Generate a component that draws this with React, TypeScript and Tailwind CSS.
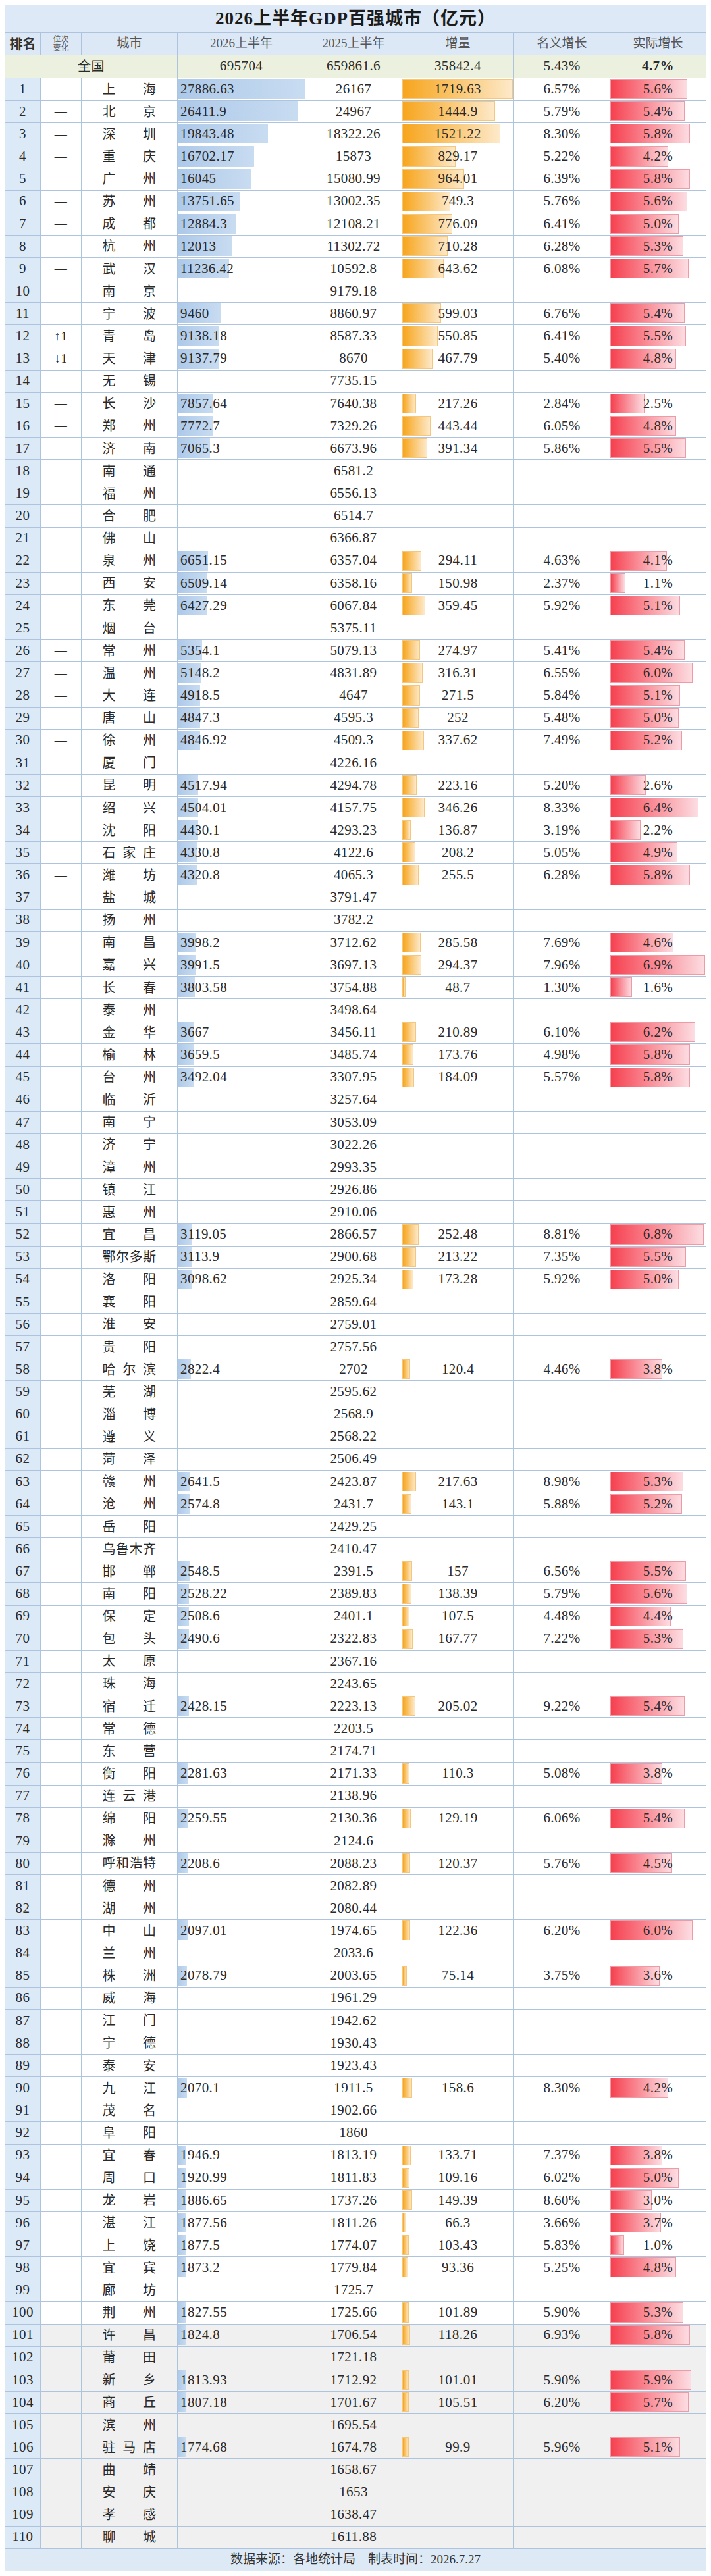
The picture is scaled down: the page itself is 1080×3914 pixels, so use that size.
import React from 'react';

type Row = [string, string, string, string, string, string, string, string];

// rank, change, city, 2026H1, 2025H1, increase, nominal, real
const rows: Row[] = [
  ['1', '—', '上海', '27886.63', '26167', '1719.63', '6.57%', '5.6%'],
  ['2', '—', '北京', '26411.9', '24967', '1444.9', '5.79%', '5.4%'],
  ['3', '—', '深圳', '19843.48', '18322.26', '1521.22', '8.30%', '5.8%'],
  ['4', '—', '重庆', '16702.17', '15873', '829.17', '5.22%', '4.2%'],
  ['5', '—', '广州', '16045', '15080.99', '964.01', '6.39%', '5.8%'],
  ['6', '—', '苏州', '13751.65', '13002.35', '749.3', '5.76%', '5.6%'],
  ['7', '—', '成都', '12884.3', '12108.21', '776.09', '6.41%', '5.0%'],
  ['8', '—', '杭州', '12013', '11302.72', '710.28', '6.28%', '5.3%'],
  ['9', '—', '武汉', '11236.42', '10592.8', '643.62', '6.08%', '5.7%'],
  ['10', '—', '南京', '', '9179.18', '', '', ''],
  ['11', '—', '宁波', '9460', '8860.97', '599.03', '6.76%', '5.4%'],
  ['12', '↑1', '青岛', '9138.18', '8587.33', '550.85', '6.41%', '5.5%'],
  ['13', '↓1', '天津', '9137.79', '8670', '467.79', '5.40%', '4.8%'],
  ['14', '—', '无锡', '', '7735.15', '', '', ''],
  ['15', '—', '长沙', '7857.64', '7640.38', '217.26', '2.84%', '2.5%'],
  ['16', '—', '郑州', '7772.7', '7329.26', '443.44', '6.05%', '4.8%'],
  ['17', '', '济南', '7065.3', '6673.96', '391.34', '5.86%', '5.5%'],
  ['18', '', '南通', '', '6581.2', '', '', ''],
  ['19', '', '福州', '', '6556.13', '', '', ''],
  ['20', '', '合肥', '', '6514.7', '', '', ''],
  ['21', '', '佛山', '', '6366.87', '', '', ''],
  ['22', '', '泉州', '6651.15', '6357.04', '294.11', '4.63%', '4.1%'],
  ['23', '', '西安', '6509.14', '6358.16', '150.98', '2.37%', '1.1%'],
  ['24', '', '东莞', '6427.29', '6067.84', '359.45', '5.92%', '5.1%'],
  ['25', '—', '烟台', '', '5375.11', '', '', ''],
  ['26', '—', '常州', '5354.1', '5079.13', '274.97', '5.41%', '5.4%'],
  ['27', '—', '温州', '5148.2', '4831.89', '316.31', '6.55%', '6.0%'],
  ['28', '—', '大连', '4918.5', '4647', '271.5', '5.84%', '5.1%'],
  ['29', '—', '唐山', '4847.3', '4595.3', '252', '5.48%', '5.0%'],
  ['30', '—', '徐州', '4846.92', '4509.3', '337.62', '7.49%', '5.2%'],
  ['31', '', '厦门', '', '4226.16', '', '', ''],
  ['32', '', '昆明', '4517.94', '4294.78', '223.16', '5.20%', '2.6%'],
  ['33', '', '绍兴', '4504.01', '4157.75', '346.26', '8.33%', '6.4%'],
  ['34', '', '沈阳', '4430.1', '4293.23', '136.87', '3.19%', '2.2%'],
  ['35', '—', '石家庄', '4330.8', '4122.6', '208.2', '5.05%', '4.9%'],
  ['36', '—', '潍坊', '4320.8', '4065.3', '255.5', '6.28%', '5.8%'],
  ['37', '', '盐城', '', '3791.47', '', '', ''],
  ['38', '', '扬州', '', '3782.2', '', '', ''],
  ['39', '', '南昌', '3998.2', '3712.62', '285.58', '7.69%', '4.6%'],
  ['40', '', '嘉兴', '3991.5', '3697.13', '294.37', '7.96%', '6.9%'],
  ['41', '', '长春', '3803.58', '3754.88', '48.7', '1.30%', '1.6%'],
  ['42', '', '泰州', '', '3498.64', '', '', ''],
  ['43', '', '金华', '3667', '3456.11', '210.89', '6.10%', '6.2%'],
  ['44', '', '榆林', '3659.5', '3485.74', '173.76', '4.98%', '5.8%'],
  ['45', '', '台州', '3492.04', '3307.95', '184.09', '5.57%', '5.8%'],
  ['46', '', '临沂', '', '3257.64', '', '', ''],
  ['47', '', '南宁', '', '3053.09', '', '', ''],
  ['48', '', '济宁', '', '3022.26', '', '', ''],
  ['49', '', '漳州', '', '2993.35', '', '', ''],
  ['50', '', '镇江', '', '2926.86', '', '', ''],
  ['51', '', '惠州', '', '2910.06', '', '', ''],
  ['52', '', '宜昌', '3119.05', '2866.57', '252.48', '8.81%', '6.8%'],
  ['53', '', '鄂尔多斯', '3113.9', '2900.68', '213.22', '7.35%', '5.5%'],
  ['54', '', '洛阳', '3098.62', '2925.34', '173.28', '5.92%', '5.0%'],
  ['55', '', '襄阳', '', '2859.64', '', '', ''],
  ['56', '', '淮安', '', '2759.01', '', '', ''],
  ['57', '', '贵阳', '', '2757.56', '', '', ''],
  ['58', '', '哈尔滨', '2822.4', '2702', '120.4', '4.46%', '3.8%'],
  ['59', '', '芜湖', '', '2595.62', '', '', ''],
  ['60', '', '淄博', '', '2568.9', '', '', ''],
  ['61', '', '遵义', '', '2568.22', '', '', ''],
  ['62', '', '菏泽', '', '2506.49', '', '', ''],
  ['63', '', '赣州', '2641.5', '2423.87', '217.63', '8.98%', '5.3%'],
  ['64', '', '沧州', '2574.8', '2431.7', '143.1', '5.88%', '5.2%'],
  ['65', '', '岳阳', '', '2429.25', '', '', ''],
  ['66', '', '乌鲁木齐', '', '2410.47', '', '', ''],
  ['67', '', '邯郸', '2548.5', '2391.5', '157', '6.56%', '5.5%'],
  ['68', '', '南阳', '2528.22', '2389.83', '138.39', '5.79%', '5.6%'],
  ['69', '', '保定', '2508.6', '2401.1', '107.5', '4.48%', '4.4%'],
  ['70', '', '包头', '2490.6', '2322.83', '167.77', '7.22%', '5.3%'],
  ['71', '', '太原', '', '2367.16', '', '', ''],
  ['72', '', '珠海', '', '2243.65', '', '', ''],
  ['73', '', '宿迁', '2428.15', '2223.13', '205.02', '9.22%', '5.4%'],
  ['74', '', '常德', '', '2203.5', '', '', ''],
  ['75', '', '东营', '', '2174.71', '', '', ''],
  ['76', '', '衡阳', '2281.63', '2171.33', '110.3', '5.08%', '3.8%'],
  ['77', '', '连云港', '', '2138.96', '', '', ''],
  ['78', '', '绵阳', '2259.55', '2130.36', '129.19', '6.06%', '5.4%'],
  ['79', '', '滁州', '', '2124.6', '', '', ''],
  ['80', '', '呼和浩特', '2208.6', '2088.23', '120.37', '5.76%', '4.5%'],
  ['81', '', '德州', '', '2082.89', '', '', ''],
  ['82', '', '湖州', '', '2080.44', '', '', ''],
  ['83', '', '中山', '2097.01', '1974.65', '122.36', '6.20%', '6.0%'],
  ['84', '', '兰州', '', '2033.6', '', '', ''],
  ['85', '', '株洲', '2078.79', '2003.65', '75.14', '3.75%', '3.6%'],
  ['86', '', '威海', '', '1961.29', '', '', ''],
  ['87', '', '江门', '', '1942.62', '', '', ''],
  ['88', '', '宁德', '', '1930.43', '', '', ''],
  ['89', '', '泰安', '', '1923.43', '', '', ''],
  ['90', '', '九江', '2070.1', '1911.5', '158.6', '8.30%', '4.2%'],
  ['91', '', '茂名', '', '1902.66', '', '', ''],
  ['92', '', '阜阳', '', '1860', '', '', ''],
  ['93', '', '宜春', '1946.9', '1813.19', '133.71', '7.37%', '3.8%'],
  ['94', '', '周口', '1920.99', '1811.83', '109.16', '6.02%', '5.0%'],
  ['95', '', '龙岩', '1886.65', '1737.26', '149.39', '8.60%', '3.0%'],
  ['96', '', '湛江', '1877.56', '1811.26', '66.3', '3.66%', '3.7%'],
  ['97', '', '上饶', '1877.5', '1774.07', '103.43', '5.83%', '1.0%'],
  ['98', '', '宜宾', '1873.2', '1779.84', '93.36', '5.25%', '4.8%'],
  ['99', '', '廊坊', '', '1725.7', '', '', ''],
  ['100', '', '荆州', '1827.55', '1725.66', '101.89', '5.90%', '5.3%'],
  ['101', '', '许昌', '1824.8', '1706.54', '118.26', '6.93%', '5.8%'],
  ['102', '', '莆田', '', '1721.18', '', '', ''],
  ['103', '', '新乡', '1813.93', '1712.92', '101.01', '5.90%', '5.9%'],
  ['104', '', '商丘', '1807.18', '1701.67', '105.51', '6.20%', '5.7%'],
  ['105', '', '滨州', '', '1695.54', '', '', ''],
  ['106', '', '驻马店', '1774.68', '1674.78', '99.9', '5.96%', '5.1%'],
  ['107', '', '曲靖', '', '1658.67', '', '', ''],
  ['108', '', '安庆', '', '1653', '', '', ''],
  ['109', '', '孝感', '', '1638.47', '', '', ''],
  ['110', '', '聊城', '', '1611.88', '', '', ''],
];

const COLS = 'grid grid-cols-[54px_62px_146px_194px_147px_170px_146px_146px]';
const CELL = 'border-r border-b border-[#aec3de] flex items-center justify-center';

function City({ name }: { name: string }) {
  return (
    <div className="w-[82px] flex justify-between text-[20px] leading-none text-[#2a2a2a]">
      {Array.from(name).map((ch, i) => (
        <span key={i}>{ch}</span>
      ))}
    </div>
  );
}

function DataRow({ row }: { row: Row }) {
  const [rank, change, city, v26, v25, inc, nom, real] = row;
  const gray = Number(rank) >= 101;
  const bg = gray ? 'bg-[#f0f0f0]' : 'bg-white';
  const realNum = parseFloat(real);

  return (
    <div className={`${COLS} h-[34.14px] text-[21px] tracking-[0.4px] text-[#2a2a2a]`}>
      <div className={`${CELL} bg-[#dce9f6]`}>{rank}</div>
      <div className={`${CELL} ${bg} text-[19px]`}>{change}</div>
      <div className={`${CELL} ${bg}`}>
        <City name={city} />
      </div>

      {/* 2026 with blue data bar */}
      <div className={`${CELL} ${bg} relative !justify-start`}>
        {v26 && (
          <div
            className="absolute left-0 top-[1px] bottom-[2px] bg-[linear-gradient(to_right,#adc9e9,#c8dcf1)]"
            style={{ width: `${(parseFloat(v26) / 27886.63) * 193}px` }}
          />
        )}
        <span className="relative pl-[4px]">{v26}</span>
      </div>

      <div className={`${CELL} ${bg}`}>{v25}</div>

      {/* increase with orange data bar */}
      <div className={`${CELL} ${bg} relative`}>
        {inc && (
          <div
            className="absolute left-0 top-[1px] bottom-[2px] border border-[#f4c77c] bg-[linear-gradient(to_right,#f7a51c,#fde9c9)]"
            style={{ width: `${Math.max(3, (parseFloat(inc) / 1719.63) * 168)}px` }}
          />
        )}
        <span className="relative">{inc}</span>
      </div>

      <div className={`${CELL} ${bg}`}>{nom}</div>

      {/* real growth with red data bar */}
      <div className={`${CELL} ${bg} relative`}>
        {real && (
          <div
            className="absolute left-0 top-[1px] bottom-[2px] border border-[#ef9ba5] bg-[linear-gradient(to_right,#f6404f,#fcdde2)]"
            style={{ width: `${(realNum / 6.9) * 144}px` }}
          />
        )}
        <span className="relative">{real}</span>
      </div>
    </div>
  );
}

export default function App() {
  return (
    <div className="min-h-[3914px] bg-white pt-[7px] px-[7px] font-['Liberation_Serif','Noto_Sans_CJK_SC',serif]">
      <div className="border-l border-t border-[#aec3de] w-[1066px]">
        {/* Title */}
        <div className="h-[42px] bg-[#dde9f6] border-r border-b border-[#aec3de] flex items-center justify-center">
          <span className="text-[27px] font-bold text-[#1c1c1c] tracking-[1px]">
            2026上半年GDP百强城市（亿元）
          </span>
        </div>

        {/* Header */}
        <div className={`${COLS} h-[34px] bg-[#dce8f5] text-[19px] text-[#555]`}>
          <div className={`${CELL} text-[20px] font-bold text-[#333]`}>排名</div>
          <div className={`${CELL} flex-col text-[12px] leading-[13px]`}>
            <span>位次</span>
            <span>变化</span>
          </div>
          <div className={CELL}>城市</div>
          <div className={CELL}>2026上半年</div>
          <div className={CELL}>2025上半年</div>
          <div className={CELL}>增量</div>
          <div className={CELL}>名义增长</div>
          <div className={CELL}>实际增长</div>
        </div>

        {/* National total */}
        <div className={`${COLS} h-[35px] bg-[#ebf1de] text-[21px] tracking-[0.4px] text-[#2a2a2a]`}>
          <div className={`${CELL} col-span-3 text-[20px]`}>全国</div>
          <div className={CELL}>695704</div>
          <div className={CELL}>659861.6</div>
          <div className={CELL}>35842.4</div>
          <div className={CELL}>5.43%</div>
          <div className={`${CELL} font-bold`}>4.7%</div>
        </div>

        {rows.map((r) => (
          <DataRow key={r[0]} row={r} />
        ))}

        {/* Footer */}
        <div className="h-[34px] bg-[#dde9f5] border-r border-b border-[#aec3de] flex items-center justify-center text-[19px] text-[#333] whitespace-pre">
          数据来源：各地统计局    制表时间：2026.7.27
        </div>
      </div>
    </div>
  );
}
